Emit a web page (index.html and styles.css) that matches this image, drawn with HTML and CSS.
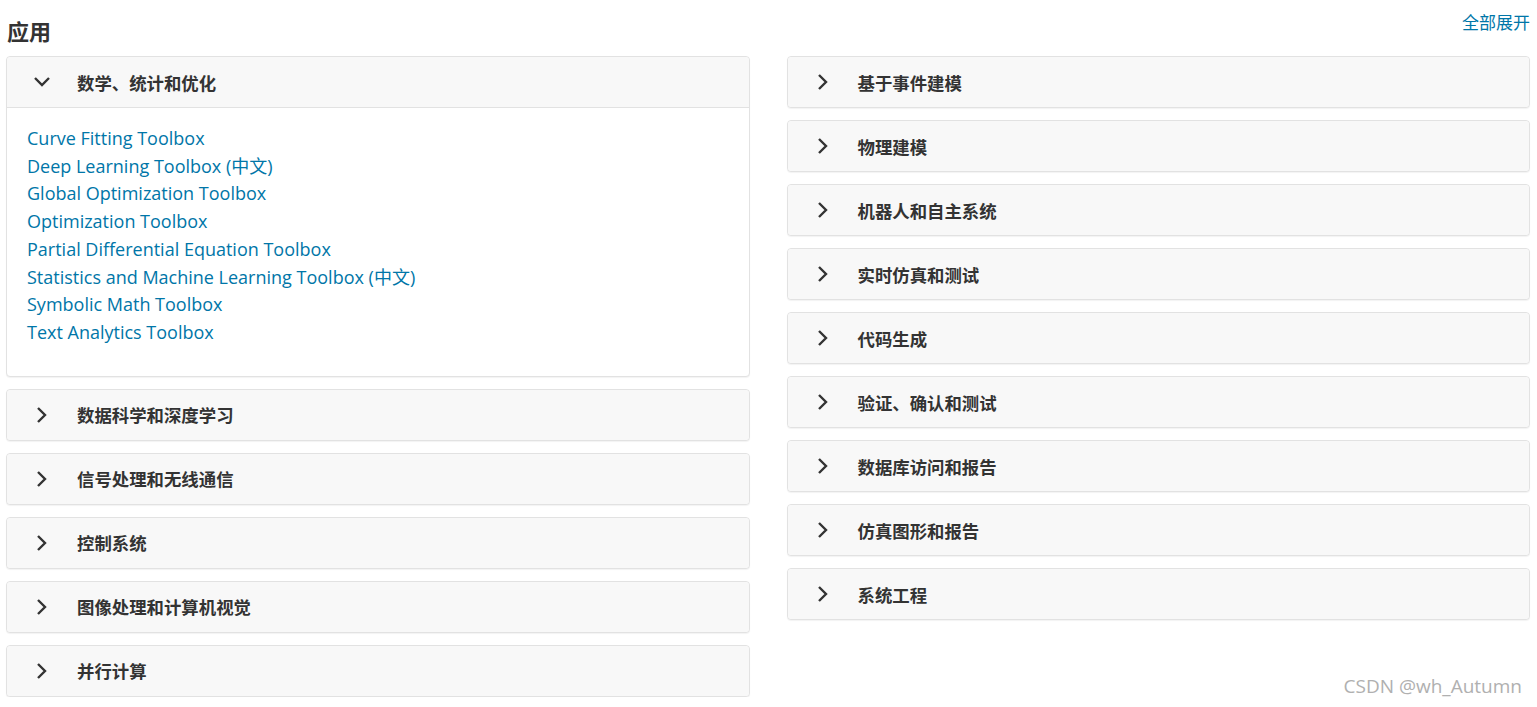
FILE: index.html
```html
<!DOCTYPE html>
<html lang="zh">

<head>
    <meta charset="UTF-8">
    <title>应用</title>
    <link rel="stylesheet" href="styles.css">
</head>

<body>
    <div class="page">
        <div class="top-bar">
            <h2>应用</h2>
            <a href="#" class="expand-all">全部展开</a>
        </div>

        <div class="columns">
            <div class="column">
                <div class="panel open">
                    <div class="panel-heading">
                        <svg class="chevron" viewBox="0 0 20 20"><path d="M3 6 L10 13 L17 6" /></svg>
                        <span>数学、统计和优化</span>
                    </div>
                    <div class="panel-body">
                        <a href="#">Curve Fitting Toolbox</a>
                        <a href="#">Deep Learning Toolbox (中文)</a>
                        <a href="#">Global Optimization Toolbox</a>
                        <a href="#">Optimization Toolbox</a>
                        <a href="#">Partial Differential Equation Toolbox</a>
                        <a href="#">Statistics and Machine Learning Toolbox (中文)</a>
                        <a href="#">Symbolic Math Toolbox</a>
                        <a href="#">Text Analytics Toolbox</a>
                    </div>
                </div>
                <div class="panel">
                    <div class="panel-heading">
                        <svg class="chevron" viewBox="0 0 20 20"><path d="M6 3 L13 10 L6 17" /></svg>
                        <span>数据科学和深度学习</span>
                    </div>
                </div>
                <div class="panel">
                    <div class="panel-heading">
                        <svg class="chevron" viewBox="0 0 20 20"><path d="M6 3 L13 10 L6 17" /></svg>
                        <span>信号处理和无线通信</span>
                    </div>
                </div>
                <div class="panel">
                    <div class="panel-heading">
                        <svg class="chevron" viewBox="0 0 20 20"><path d="M6 3 L13 10 L6 17" /></svg>
                        <span>控制系统</span>
                    </div>
                </div>
                <div class="panel">
                    <div class="panel-heading">
                        <svg class="chevron" viewBox="0 0 20 20"><path d="M6 3 L13 10 L6 17" /></svg>
                        <span>图像处理和计算机视觉</span>
                    </div>
                </div>
                <div class="panel">
                    <div class="panel-heading">
                        <svg class="chevron" viewBox="0 0 20 20"><path d="M6 3 L13 10 L6 17" /></svg>
                        <span>并行计算</span>
                    </div>
                </div>
            </div>

            <div class="column">
                <div class="panel">
                    <div class="panel-heading">
                        <svg class="chevron" viewBox="0 0 20 20"><path d="M6 3 L13 10 L6 17" /></svg>
                        <span>基于事件建模</span>
                    </div>
                </div>
                <div class="panel">
                    <div class="panel-heading">
                        <svg class="chevron" viewBox="0 0 20 20"><path d="M6 3 L13 10 L6 17" /></svg>
                        <span>物理建模</span>
                    </div>
                </div>
                <div class="panel">
                    <div class="panel-heading">
                        <svg class="chevron" viewBox="0 0 20 20"><path d="M6 3 L13 10 L6 17" /></svg>
                        <span>机器人和自主系统</span>
                    </div>
                </div>
                <div class="panel">
                    <div class="panel-heading">
                        <svg class="chevron" viewBox="0 0 20 20"><path d="M6 3 L13 10 L6 17" /></svg>
                        <span>实时仿真和测试</span>
                    </div>
                </div>
                <div class="panel">
                    <div class="panel-heading">
                        <svg class="chevron" viewBox="0 0 20 20"><path d="M6 3 L13 10 L6 17" /></svg>
                        <span>代码生成</span>
                    </div>
                </div>
                <div class="panel">
                    <div class="panel-heading">
                        <svg class="chevron" viewBox="0 0 20 20"><path d="M6 3 L13 10 L6 17" /></svg>
                        <span>验证、确认和测试</span>
                    </div>
                </div>
                <div class="panel">
                    <div class="panel-heading">
                        <svg class="chevron" viewBox="0 0 20 20"><path d="M6 3 L13 10 L6 17" /></svg>
                        <span>数据库访问和报告</span>
                    </div>
                </div>
                <div class="panel">
                    <div class="panel-heading">
                        <svg class="chevron" viewBox="0 0 20 20"><path d="M6 3 L13 10 L6 17" /></svg>
                        <span>仿真图形和报告</span>
                    </div>
                </div>
                <div class="panel">
                    <div class="panel-heading">
                        <svg class="chevron" viewBox="0 0 20 20"><path d="M6 3 L13 10 L6 17" /></svg>
                        <span>系统工程</span>
                    </div>
                </div>
            </div>
        </div>
    </div>

    <!-- watermark -->
    <div class="watermark">CSDN @wh_Autumn</div>
</body>

</html>
```

FILE: styles.css
```css
body {
    font-family: "Open Sans", "Noto Sans CJK SC", sans-serif;
    margin: 0;
    padding: 0;
    background-color: #fff;
    color: #333;
}

.page {
    padding: 0 7px 0 6px;
}

.top-bar {
    display: flex;
    justify-content: space-between;
    align-items: flex-start;
    height: 56px;
}

.top-bar h2 {
    margin: 17px 0 0 1px;
    font-family: "Noto Sans CJK SC", sans-serif;
    font-size: 22px;
    font-weight: bold;
    line-height: 26px;
    color: #333;
}

.expand-all {
    margin-top: 11px;
    font-family: "Noto Sans CJK SC", sans-serif;
    font-size: 17px;
    line-height: 22px;
    color: #0076a8;
    text-decoration: none;
}

.columns {
    display: flex;
    gap: 37px;
}

.column {
    flex: 1;
    display: flex;
    flex-direction: column;
    gap: 12px;
}

.panel {
    border: 1px solid #e2e2e2;
    border-radius: 4px;
    background-color: #fff;
    box-shadow: 0 1px 1px rgba(0, 0, 0, 0.05);
}

.panel-heading {
    display: flex;
    align-items: center;
    height: 50px;
    background-color: #f8f8f8;
    border-radius: 4px;
    font-family: "Noto Sans CJK SC", sans-serif;
    font-size: 17.4px;
    font-weight: bold;
    color: #333;
}

.panel.open .panel-heading {
    border-bottom: 1px solid #e2e2e2;
    border-radius: 4px 4px 0 0;
}

.chevron {
    width: 20px;
    height: 20px;
    margin: 0 25px 0 25px;
    fill: none;
    stroke: #333;
    stroke-width: 2.4;
}

.panel-body {
    display: flex;
    flex-direction: column;
    align-items: flex-start;
    padding: 17px 20px 29px;
}

.panel-body a {
    font-size: 18px;
    line-height: 27.7px;
    color: #0076a8;
    text-decoration: none;
}

.watermark {
    position: absolute;
    right: 15px;
    top: 673px;
    font-size: 19px;
    color: #b0b0b0;
}
```
